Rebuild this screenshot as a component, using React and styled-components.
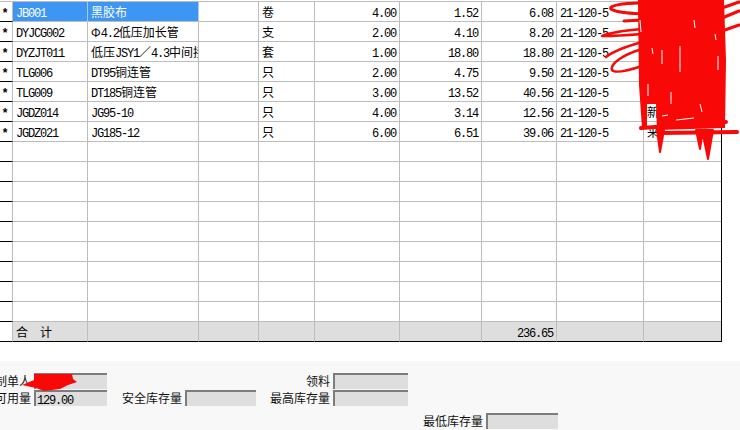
import React from "react";
import styled, { createGlobalStyle } from "styled-components";

const GlobalStyle = createGlobalStyle`
  html, body {
    margin: 0;
    height: 430px;
    overflow: hidden;
    background: #fff;
    color: #000;
    font-family: "Noto Sans CJK SC", "Liberation Sans", sans-serif;
    font-size: 12px;
  }
`;

const Page = styled.div`
  position: relative;
  width: 740px;
  height: 430px;
  overflow: hidden;
`;

const Sheet = styled.div`
  width: 722px;
  box-sizing: border-box;
  padding-top: 1px;
  border-right: 1px solid #000;
`;

const Row = styled.div`
  display: grid;
  grid-template-columns: 13px 75px 111px 60px 56px 85px 82px 75px 87px 77px;
  box-sizing: border-box;
  border-top: ${(props) => (props.$first ? "1px solid #bdbdbd" : "0")};
  height: ${(props) => (props.$first ? "21px" : "20px")};
`;

const Gutter = styled.div`
  box-sizing: border-box;
  border-right: 1px solid #bdbdbd;
  border-bottom: 1px solid #000;
  font-family: "Liberation Mono", monospace;
  font-weight: bold;
  font-size: 12px;
  line-height: 24px;
  text-align: center;
  padding-right: 2px;
  overflow: hidden;
`;

const Cell = styled.div`
  box-sizing: border-box;
  overflow: hidden;
  white-space: nowrap;
  line-height: ${(props) => (props.$total ? "20px" : "19px")};
  padding: ${(props) => (props.$right ? "0 3px 0 0" : "0 0 0 3px")};
  text-align: ${(props) => (props.$right ? "right" : "left")};
  background: ${(props) =>
    props.$selected ? "#3d96f4" : props.$total ? "#dedede" : "transparent"};
  color: ${(props) => (props.$selected ? "#fff" : "#000")};
  border-right: ${(props) =>
    props.$last
      ? "0"
      : `1px solid ${props.$selected ? "#a9cdf2" : "#bdbdbd"}`};
  border-bottom: 1px solid
    ${(props) => (props.$total ? "#000" : "#bdbdbd")};
`;

const Latin = styled.span`
  font-family: "Liberation Mono", monospace;
  font-size: 12px;
  letter-spacing: -1.2px;
`;

const Form = styled.div`
  margin-top: 19px;
  height: 69px;
  box-sizing: border-box;
  padding-top: 12px;
  background: #f8f8f8;
  display: grid;
  grid-template-columns: 107px 149px 152px 150px;
  grid-template-rows: 17px 23px 16px;
`;

const Field = styled.div`
  grid-column: ${(props) => props.$col};
  grid-row: ${(props) => props.$row};
  display: flex;
  justify-content: flex-end;
  align-items: flex-start;
  gap: 3px;
  white-space: nowrap;
`;

const Label = styled.span`
  line-height: 15px;
  color: #111;
`;

const Box = styled.div`
  width: ${(props) => props.$width}px;
  height: 16px;
  box-sizing: border-box;
  flex: none;
  background: #dedede;
  border-top: 2px solid #7d7d7d;
  border-left: 2px solid #7d7d7d;
  padding-left: 1px;
  line-height: 14px;
`;

const Scribble = styled.svg`
  position: absolute;
  left: 0;
  top: 0;
  pointer-events: none;
`;

const RED = "#f90808";

const ITEMS = [
  ["JB001", "黑胶布", "卷", "4.00", "1.52", "6.08", "21-120-5", ""],
  ["DYJCG002", "Φ4.2低压加长管", "支", "2.00", "4.10", "8.20", "21-120-5", ""],
  ["DYZJT011", "低压JSY1／4.3中间接头", "套", "1.00", "18.80", "18.80", "21-120-5", ""],
  ["TLG006", "DT95铜连管", "只", "2.00", "4.75", "9.50", "21-120-5", ""],
  ["TLG009", "DT185铜连管", "只", "3.00", "13.52", "40.56", "21-120-5", ""],
  ["JGDZ014", "JG95-10", "只", "4.00", "3.14", "12.56", "21-120-5", "新"],
  ["JGDZ021", "JG185-12", "只", "6.00", "6.51", "39.06", "21-120-5", "来"],
];

const EMPTY_ROWS = 9;

// Latin runs are half width, as in the old bitmap grid font
const Text = ({ children }) => {
  const runs = String(children).match(/[\x20-\x7e]+|[^\x20-\x7e]+/g) || [];
  return runs.map((run, i) =>
    /^[\x20-\x7e]/.test(run) ? <Latin key={i}>{run}</Latin> : <span key={i}>{run}</span>
  );
};

const ItemRow = ({ item, index }) => {
  const [code, name, unit, qty, price, amount, lot, note] = item;
  const selected = index === 0;
  return (
    <Row $first={selected}>
      <Gutter>*</Gutter>
      <Cell $selected={selected}><Text>{code}</Text></Cell>
      <Cell $selected={selected}><Text>{name}</Text></Cell>
      <Cell />
      <Cell>{unit}</Cell>
      <Cell $right><Text>{qty}</Text></Cell>
      <Cell $right><Text>{price}</Text></Cell>
      <Cell $right><Text>{amount}</Text></Cell>
      <Cell><Text>{lot}</Text></Cell>
      <Cell $last>{note}</Cell>
    </Row>
  );
};

const BlankRow = () => (
  <Row>
    <Gutter />
    <Cell /><Cell /><Cell /><Cell /><Cell /><Cell /><Cell /><Cell />
    <Cell $last />
  </Row>
);

const TotalRow = () => (
  <Row>
    <Gutter />
    <Cell $total>合　计</Cell>
    <Cell $total /><Cell $total /><Cell $total /><Cell $total /><Cell $total />
    <Cell $total $right><Text>236.65</Text></Cell>
    <Cell $total />
    <Cell $total $last />
  </Row>
);

const App = () => (
  <Page>
    <GlobalStyle />
    <Sheet>
      {ITEMS.map((item, i) => (
        <ItemRow key={item[0]} item={item} index={i} />
      ))}
      {Array.from({ length: EMPTY_ROWS }, (_, i) => (
        <BlankRow key={i} />
      ))}
      <TotalRow />
    </Sheet>
    <Form>
      <Field $col={1} $row={1}><Label>制单人</Label><Box $width={73} /></Field>
      <Field $col={1} $row={2}><Label>可用量</Label><Box $width={73}><Text>129.00</Text></Box></Field>
      <Field $col={2} $row={2}><Label>安全库存量</Label><Box $width={71} /></Field>
      <Field $col={3} $row={1}><Label>领料</Label><Box $width={75} /></Field>
      <Field $col={3} $row={2}><Label>最高库存量</Label><Box $width={75} /></Field>
      <Field $col={4} $row={3}><Label>最低库存量</Label><Box $width={72} /></Field>
    </Form>
    <Scribble width="740" height="430" viewBox="0 0 740 430" fill="none">
      <path
        fill={RED}
        d="M34 374 L72 374 L73 379 L77 382 L68 385 L60 389 L44 391 L36 388 L22 385 L34 380 Z"
      />
      <g stroke={RED} strokeLinecap="round" strokeLinejoin="round">
        <path
          fill={RED}
          stroke="none"
          d="M638 0 L724 0 L726 60 L725 128 L657 130 L656 104 L647 104 L647 128 L642 128 L639 85 Z"
        />
        <path
          strokeWidth="3"
          d="M640 3 C622 3 608 6 611 9 C616 13 630 13 642 14 M624 21 L642 20 M722 8 L739 2 M722 18 L739 11 M722 31 L739 25"
        />
        <path
          strokeWidth="2.5"
          d="M642 29 C620 31 608 33 602 36 C615 36 630 35 642 34 M642 42 C628 46 612 52 606 57 M642 49 C622 55 610 64 612 70 C615 74 630 70 642 66"
        />
        <path strokeWidth="4" d="M641 128 L726 122 M660 133 L737 132" />
        <path strokeWidth="2" fill={RED} d="M657 130 L660 152 L664 130 Z M696 130 L700 149 L703 130 Z M702 130 L708 159 L713 130 Z" />
      </g>
      {/* small gaps where the pen strokes did not meet */}
      <path
        stroke="#fff"
        strokeWidth="1"
        d="M640 20 L641 32 M652 48 L653 54 M662 50 L662 64 M680 46 L680 72 M694 20 L695 28 M715 34 L716 40 M718 56 L718 70 M662 116 L668 115 M676 120 L694 118 M671 92 L671 104 M700 104 L702 112 M648 84 L648 96"
      />
    </Scribble>
  </Page>
);

export default App;
